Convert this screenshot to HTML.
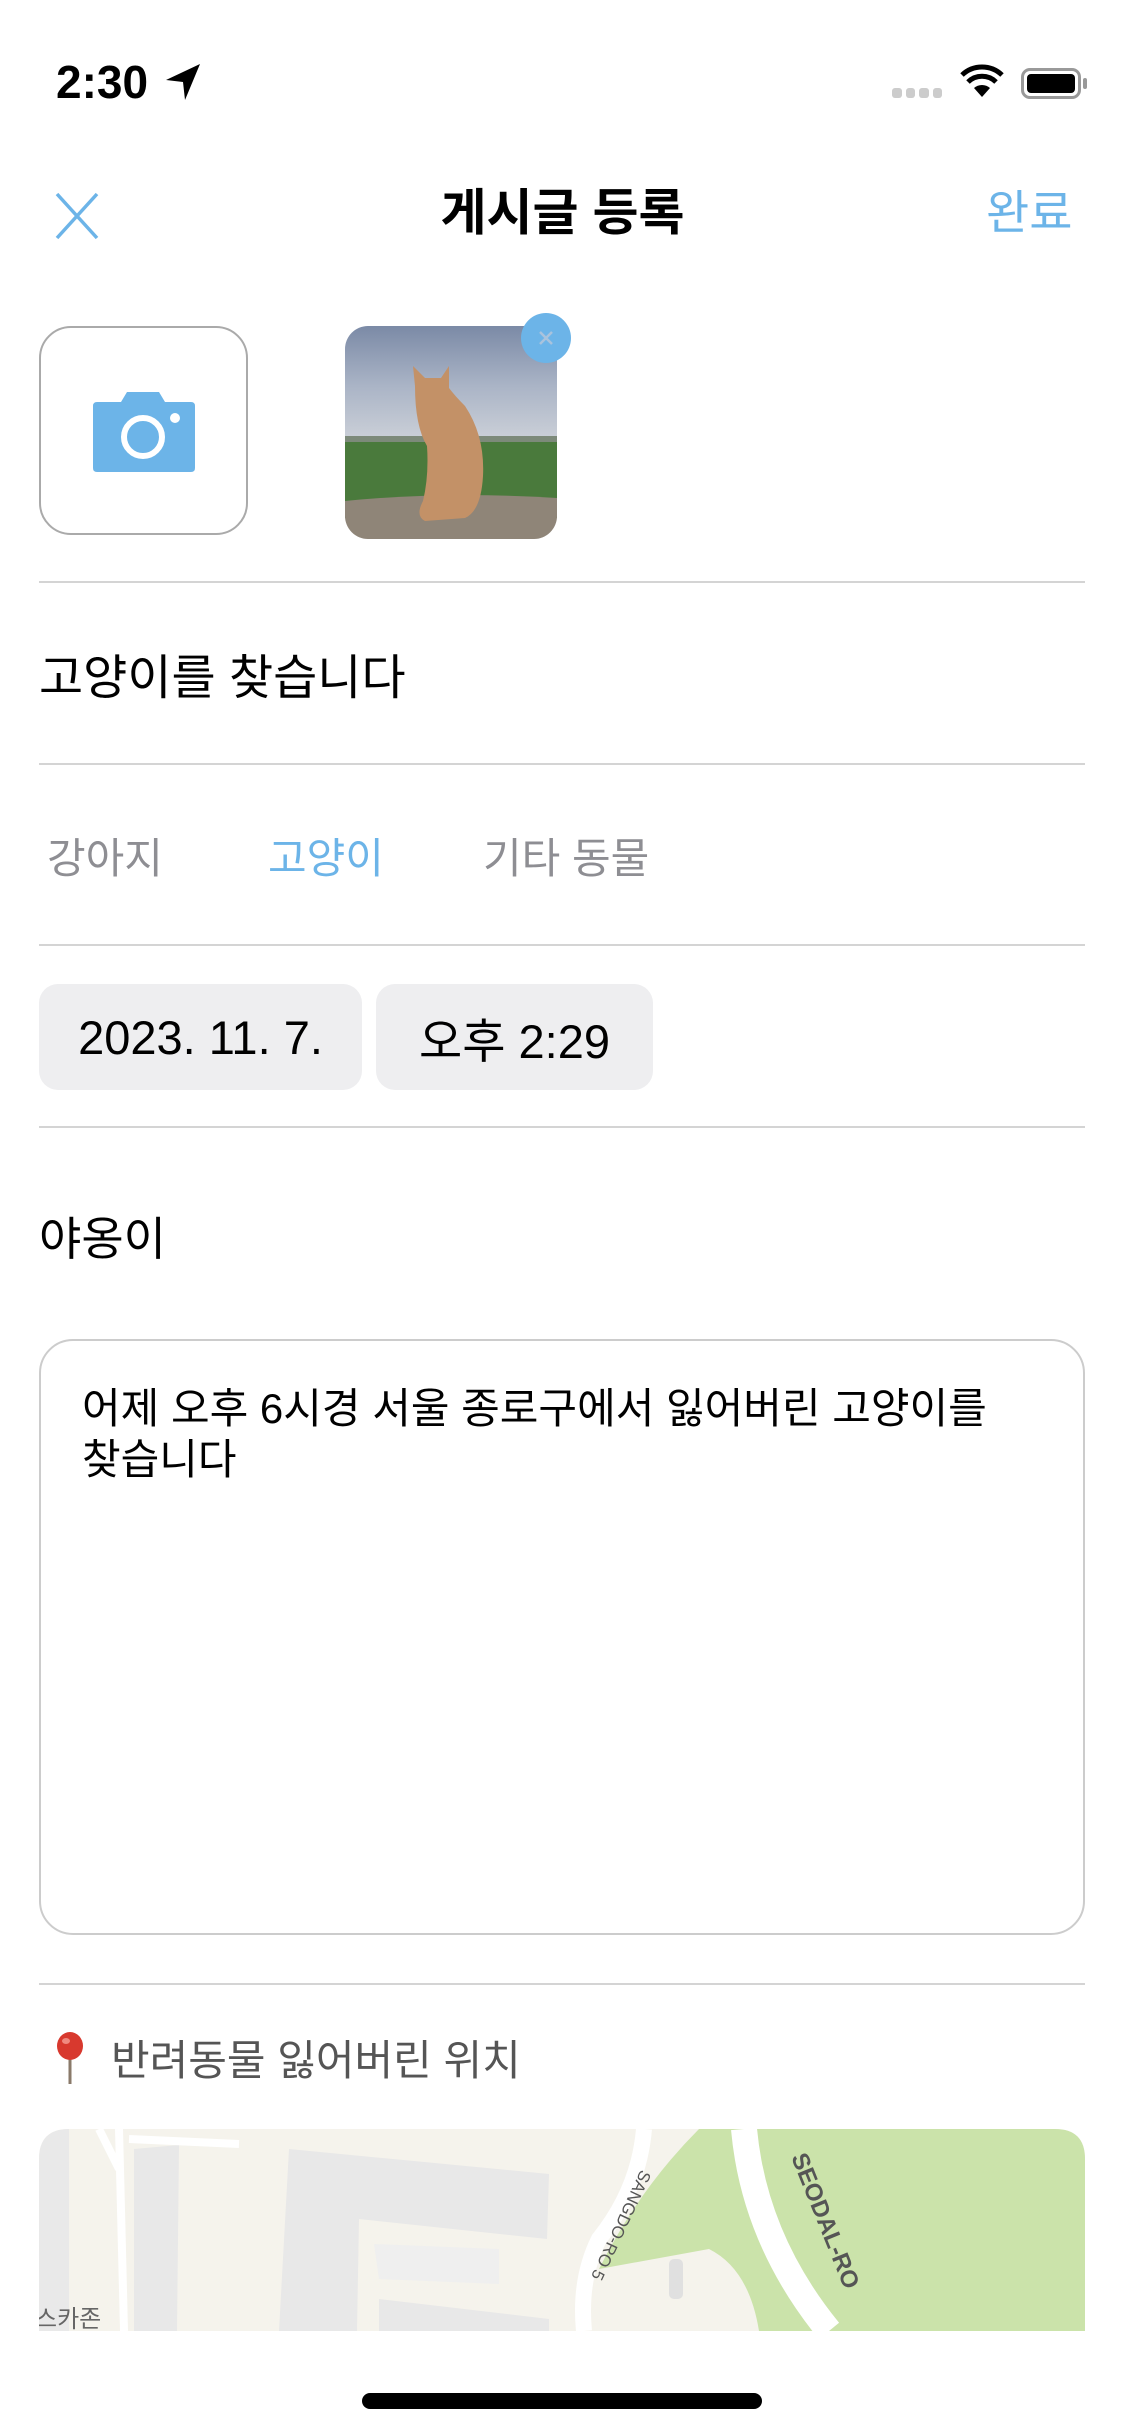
<!DOCTYPE html>
<html><head><meta charset="utf-8"><style>
*{margin:0;padding:0;box-sizing:border-box}
body{width:1125px;height:2436px;background:#fff;position:relative;overflow:hidden;font-family:"Liberation Sans","Noto Sans CJK KR",sans-serif;color:#000}
.a{position:absolute}
.hr{position:absolute;left:39px;width:1046px;height:2px;background:#d4d4d4}
.t{position:absolute;white-space:nowrap;line-height:1}
</style></head><body>
<div class="t" style="left:56px;top:59px;font-size:46px;font-weight:bold">2:30</div>
<svg class="a" style="left:164px;top:62px" width="40" height="40" viewBox="0 0 40 40"><path d="M36 2 L2 18 L19 20 L21 38 Z" fill="#000"/></svg>
<div class="a" style="left:892px;top:88px;width:50px;height:10px;display:flex;gap:4px"><i style="flex:1;background:#ccc;border-radius:3px"></i><i style="flex:1;background:#ccc;border-radius:3px"></i><i style="flex:1;background:#ccc;border-radius:3px"></i><i style="flex:1;background:#ccc;border-radius:3px"></i></div>
<svg class="a" style="left:960px;top:64px" width="44" height="34" viewBox="0 0 44 34"><path d="M22 33 L14 24 A12 12 0 0 1 30 24 Z" fill="#000"/><path d="M8 18 A20 20 0 0 1 36 18" stroke="#000" stroke-width="5" fill="none"/><path d="M2 11 A29 29 0 0 1 42 11" stroke="#000" stroke-width="5" fill="none"/></svg>
<div class="a" style="left:1021px;top:68px;width:60px;height:31px;border:3px solid #999;border-radius:9px;padding:3px"><div style="width:100%;height:100%;background:#000;border-radius:4px"></div></div>
<div class="a" style="left:1083px;top:78px;width:4px;height:11px;background:#999;border-radius:2px"></div>

<svg class="a" style="left:54px;top:192px" width="46" height="48" viewBox="0 0 46 48"><path d="M3 2 L43 46 M43 2 L3 46" stroke="#6cb4e8" stroke-width="3.5"/></svg>
<div class="t" style="left:0;width:1125px;text-align:center;top:188px;font-size:50px;font-weight:bold">게시글 등록</div>
<div class="t" style="left:986px;top:189px;font-size:47px;color:#6cb4e8">완료</div>

<div class="a" style="left:39px;top:326px;width:209px;height:209px;border:2px solid #aaa;border-radius:32px"></div>
<svg class="a" style="left:93px;top:392px" width="102" height="80" viewBox="0 0 102 80"><path d="M4 10 H28 L34 0 H66 L72 10 H98 Q102 10 102 14 V76 Q102 80 98 80 H4 Q0 80 0 76 V14 Q0 10 4 10Z" fill="#6cb4e8"/><circle cx="50" cy="45" r="19" fill="none" stroke="#fff" stroke-width="6"/><circle cx="82" cy="26" r="5" fill="#fff"/></svg>

<svg class="a" style="left:345px;top:326px" width="212" height="213" viewBox="0 0 212 213">
<defs><clipPath id="c"><rect width="212" height="213" rx="23"/></clipPath><linearGradient id="s" x1="0" y1="0" x2="0" y2="1"><stop offset="0" stop-color="#7b8aa6"/><stop offset="0.5" stop-color="#aab4c6"/><stop offset="1" stop-color="#cfd3da"/></linearGradient></defs>
<g clip-path="url(#c)"><rect width="212" height="120" fill="url(#s)"/><rect y="112" width="212" height="80" fill="#4a7a3c"/><rect y="110" width="212" height="6" fill="#7d8a7a"/><path d="M0 175 Q100 165 212 172 V213 H0Z" fill="#8f8578"/>
<path d="M70 60 L68 40 L80 52 L96 52 L104 40 L104 62 Q110 70 120 80 Q140 110 138 150 Q136 185 120 192 L80 195 Q70 190 78 175 Q84 150 82 120 Q70 100 70 60Z" fill="#c39167"/></g></svg>
<div class="a" style="left:521px;top:313px;width:50px;height:50px;border-radius:50%;background:#6cb4e8"></div>
<svg class="a" style="left:536px;top:328px" width="20" height="20"><path d="M4 4 L16 16 M16 4 L4 16" stroke="#a9c3dd" stroke-width="2.5"/></svg>

<div class="hr" style="top:581px"></div>
<div class="t" style="left:39px;top:655px;font-size:48px">고양이를 찾습니다</div>
<div class="hr" style="top:763px"></div>
<div class="t" style="left:47px;top:838px;font-size:42px;color:#8e8e93">강아지</div>
<div class="t" style="left:268px;top:838px;font-size:42px;color:#6cb4e8">고양이</div>
<div class="t" style="left:483px;top:838px;font-size:42px;color:#8e8e93">기타 동물</div>
<div class="hr" style="top:944px"></div>
<div class="a" style="left:39px;top:984px;width:323px;height:106px;background:#eeeef0;border-radius:19px;font-size:47px;display:flex;align-items:center;justify-content:center">2023. 11. 7.</div>
<div class="a" style="left:376px;top:984px;width:277px;height:106px;background:#eeeef0;border-radius:19px;font-size:47px;display:flex;align-items:center;justify-content:center">오후 2:29</div>
<div class="hr" style="top:1126px"></div>
<div class="t" style="left:39px;top:1216px;font-size:46px">야옹이</div>
<div class="a" style="left:39px;top:1339px;width:1046px;height:596px;border:2px solid #ccc;border-radius:34px"></div>
<div class="a" style="left:82px;top:1383px;font-size:42px;line-height:51px;width:990px;white-space:nowrap">어제 오후 6시경 서울 종로구에서 잃어버린 고양이를<br>찾습니다</div>
<div class="hr" style="top:1983px"></div>
<svg class="a" style="left:52px;top:2032px" width="36" height="54" viewBox="0 0 36 54"><line x1="18" y1="22" x2="18" y2="52" stroke="#8a7a6a" stroke-width="3"/><ellipse cx="18" cy="14" rx="13" ry="14" fill="#d8392e"/><ellipse cx="14" cy="9" rx="4" ry="3" fill="#f08a80"/></svg>
<div class="t" style="left:111px;top:2040px;font-size:42px;color:#555">반려동물 잃어버린 위치</div>

<svg class="a" style="left:39px;top:2129px" width="1046" height="202" viewBox="0 0 1046 202">
<defs><clipPath id="m"><path d="M30 0 H1016 Q1046 0 1046 30 V202 H0 V30 Q0 0 30 0Z"/></clipPath></defs>
<g clip-path="url(#m)"><rect width="1046" height="202" fill="#f5f3ec"/>
<rect x="0" y="0" width="30" height="202" fill="#e9e9e9"/>
<path d="M95 20 L140 16 L138 202 L95 202Z" fill="#e8e8e8"/>
<path d="M250 20 L510 45 L508 110 L320 90 L318 202 L240 202Z" fill="#e8e8e8"/>
<path d="M340 170 L510 190 L510 202 L340 202Z" fill="#e8e8e8"/>
<path d="M335 115 L460 120 L460 155 L340 150Z" fill="#efefef"/>
<path d="M660 0 H1046 V202 H720 Q710 140 670 120 L560 140 Q600 60 660 0Z" fill="#cbe3aa"/>
<path d="M605 0 Q600 60 560 110 Q540 150 545 202" stroke="#fff" stroke-width="16" fill="none"/>
<path d="M705 0 Q715 110 790 202" stroke="#fff" stroke-width="26" fill="none"/>
<path d="M80 0 L85 202 M60 0 L80 40 M90 10 L200 15" stroke="#fff" stroke-width="8" fill="none"/>
<rect x="630" y="130" width="14" height="40" rx="5" fill="#e0e0e0"/>
<text x="752" y="28" font-size="24" font-weight="bold" fill="#555" transform="rotate(68 752 28)" font-family="Liberation Sans">SEODAL-RO</text>
<text x="602" y="40" font-size="17" fill="#555" transform="rotate(115 602 40)" font-family="Liberation Sans">SANGDO-RO 5</text>
<text x="-4" y="198" font-size="24" fill="#666">스카존</text></g></svg>

<div class="a" style="left:362px;top:2393px;width:400px;height:16px;background:#000;border-radius:8px"></div>
</body></html>
